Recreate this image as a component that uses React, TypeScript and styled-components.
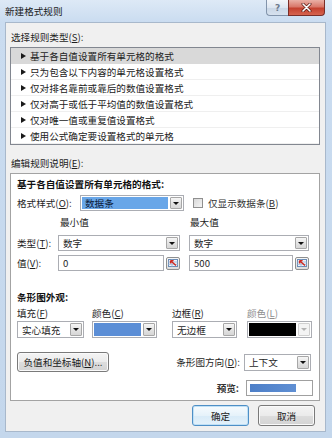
import React from 'react';
import styled, { createGlobalStyle } from 'styled-components';

const Global = createGlobalStyle`
  html, body { margin: 0; padding: 0; background: #c6d8ed; }
  body {
    font-family: "Noto Sans CJK SC", "Noto Sans", sans-serif;
    font-size: 9.6px;
    color: #1e1e1e;
  }
  * { box-sizing: border-box; }
  u { text-decoration: underline; text-underline-offset: 1px; }
`;

const Window = styled.div`
  width: 332px;
  height: 438px;
  display: flex;
  flex-direction: column;
  padding: 0 6px 6px 5px;
  background: linear-gradient(180deg, #dde9f6 0px, #cadcf0 22px, #c4d7ec 100%);
`;

const TitleBar = styled.div`
  height: 22px;
  display: flex;
  align-items: flex-start;
  flex-shrink: 0;
`;

const TitleText = styled.div`
  flex: 1;
  line-height: 22px;
  color: #1a1a1a;
`;

const CaptionButtons = styled.div`
  display: flex;
  margin-right: 1px;
`;

const HelpButton = styled.div`
  width: 22px;
  height: 16px;
  border: 1px solid #8294ab;
  border-top: none;
  border-right: none;
  border-radius: 0 0 0 4px;
  background: linear-gradient(180deg, #f3f6fa 0%, #dde6f1 50%, #c9d6e6 51%, #d6e1ee 100%);
  display: flex;
  align-items: center;
  justify-content: center;
  color: #6d7b8d;
  font-family: "DejaVu Sans", sans-serif;
  font-size: 9px;
  font-weight: bold;
`;

const CloseButton = styled.div`
  width: 37px;
  height: 16px;
  border: 1px solid #7a2e28;
  border-top: none;
  border-radius: 0 0 4px 0;
  background: linear-gradient(180deg, #eab0a6 0%, #d9786a 45%, #c4412f 55%, #d6644f 100%);
  display: flex;
  align-items: center;
  justify-content: center;
`;

const Content = styled.div`
  flex: 1;
  background: #f0f0f0;
  border: 1px solid #a8b8cb;
  padding: 6px 5px 0 4px;
  display: flex;
  flex-direction: column;
`;

const SectionLabel = styled.div<{ $top?: number }>`
  height: 16px;
  line-height: 16px;
  margin-top: ${p => p.$top ?? 0}px;
  margin-bottom: 2px;
  padding-left: 1px;
`;

const RuleList = styled.div`
  height: 98px;
  border: 1px solid #828790;
  background: #fff;
  display: flex;
  flex-direction: column;
`;

const RuleRow = styled.div<{ $selected?: boolean }>`
  height: 16px;
  display: flex;
  align-items: center;
  padding-left: 10px;
  gap: 4px;
  background: ${p => (p.$selected ? '#d9d9d9' : '#fff')};
  border-bottom: 1px solid ${p => (p.$selected ? '#d9d9d9' : '#efefef')};
  color: #222;
`;

const RowArrow = styled.span`
  width: 0;
  height: 0;
  border-top: 3px solid transparent;
  border-bottom: 3px solid transparent;
  border-left: 5px solid #1a1a1a;
`;

const EditBox = styled.div`
  height: 228px;
  border: 1px solid #a3a3a3;
  background: #fff;
  padding: 2px 8px 0 6px;
  display: flex;
  flex-direction: column;
`;

const BoldLine = styled.div<{ $top: number }>`
  height: 16px;
  line-height: 16px;
  margin-top: ${p => p.$top}px;
  font-weight: 700;
  color: #111;
`;

const StyleRow = styled.div`
  margin-top: 3px;
  height: 16px;
  display: flex;
  align-items: center;
`;

const FieldLabel = styled.div<{ $w?: number; $muted?: boolean }>`
  width: ${p => (p.$w ? `${p.$w}px` : 'auto')};
  flex-shrink: 0;
  color: ${p => (p.$muted ? '#8e8e8e' : '#1e1e1e')};
  white-space: nowrap;
`;

const Combo = styled.div<{ $w?: number; $h?: number }>`
  width: ${p => (p.$w ? `${p.$w}px` : '100%')};
  height: ${p => p.$h ?? 16}px;
  border: 1px solid #abadb3;
  background: #fff;
  padding: 1px;
  display: flex;
  align-items: stretch;
`;

const ComboText = styled.div<{ $selected?: boolean }>`
  flex: 1;
  padding-left: 3px;
  display: flex;
  align-items: center;
  margin-right: 2px;
  background: ${p => (p.$selected ? '#68a6e8' : 'transparent')};
  color: ${p => (p.$selected ? '#0c1a38' : '#1e1e1e')};
`;

const Swatch = styled.div<{ $color: string }>`
  flex: 1;
  margin-right: 2px;
  background: ${p => p.$color};
`;

const ComboButton = styled.div<{ $disabled?: boolean }>`
  width: 12px;
  border: 1px solid ${p => (p.$disabled ? '#d0d0d0' : '#a7a7a7')};
  border-radius: 1px;
  background: ${p => (p.$disabled ? '#f4f4f4' : 'linear-gradient(180deg, #f6f6f6 0%, #e4e4e4 50%, #d6d6d6 100%)')};
  display: flex;
  align-items: center;
  justify-content: center;
`;

const DownArrow = styled.span<{ $disabled?: boolean }>`
  width: 0;
  height: 0;
  border-left: 3px solid transparent;
  border-right: 3px solid transparent;
  border-top: 3px solid ${p => (p.$disabled ? '#b4b4b4' : '#111')};
`;

const CheckBox = styled.span`
  width: 10px;
  height: 10px;
  margin-left: 9px;
  border: 1px solid #8f8f8f;
  background: linear-gradient(135deg, #d8d8d8, #f4f4f4);
  flex-shrink: 0;
`;

const CheckText = styled.span`
  margin-left: 5px;
  color: #333;
`;

const FieldGrid = styled.div<{ $top: number }>`
  margin-top: ${p => p.$top}px;
  height: 16px;
  display: grid;
  grid-template-columns: 32px 122px 120px;
  column-gap: 9px;
  align-items: center;
`;

const ColHeader = styled.div<{ $pad: number }>`
  padding-left: ${p => p.$pad}px;
`;

const ValueCell = styled.div`
  display: flex;
  align-items: center;
  gap: 2px;
  height: 16px;
`;

const TextInput = styled.div`
  flex: 1;
  height: 16px;
  border: 1px solid #abadb3;
  background: #fff;
  padding-left: 4px;
  display: flex;
  align-items: center;
`;

const RefButton = styled.div`
  width: 14px;
  height: 13px;
  border: 1px solid #8e8f8f;
  border-radius: 2px;
  background: linear-gradient(180deg, #f8f8f8, #dcdcdc);
  display: flex;
  align-items: center;
  justify-content: center;
`;

const AppearGrid = styled.div<{ $top: number; $h: number }>`
  margin-top: ${p => p.$top}px;
  height: ${p => p.$h}px;
  display: grid;
  grid-template-columns: 75px 80px 75px 65px;
  align-items: center;
`;

const ActionRow = styled.div`
  margin-top: 14px;
  height: 20px;
  display: flex;
  align-items: center;
`;

const PushButton = styled.div<{ $w: number; $h?: number; $default?: boolean }>`
  width: ${p => p.$w}px;
  height: ${p => p.$h ?? 21}px;
  border: 1px solid ${p => (p.$default ? '#4e8fc6' : '#7a7a7a')};
  border-radius: 3px;
  background: ${p =>
    p.$default
      ? 'linear-gradient(180deg, #f6fbfe 0%, #e6f2fa 50%, #d8ebf8 51%, #e4f1fa 100%)'
      : 'linear-gradient(180deg, #f4f4f4 0%, #ebebeb 50%, #dddddd 51%, #d3d3d3 100%)'};
  box-shadow: ${p => (p.$default ? 'inset 0 0 0 1px #bfe0f6' : 'inset 0 0 0 1px #fafafa')};
  display: flex;
  align-items: center;
  justify-content: center;
  color: #1a1a1a;
  flex-shrink: 0;
`;

const Spacer = styled.div`
  flex: 1;
`;

const DirLabel = styled.div`
  margin-right: 4px;
`;

const PreviewRow = styled.div`
  margin-top: 8px;
  height: 16px;
  display: flex;
  align-items: center;
  justify-content: flex-end;
  margin-right: -2px;
`;

const PreviewLabel = styled.div`
  margin-right: 7px;
  font-weight: 700;
  color: #333;
`;

const PreviewBox = styled.div`
  width: 67px;
  height: 16px;
  border: 1px solid #a0a0a0;
  background: #fff;
  padding: 3px 16px 3px 3px;
`;

const PreviewBar = styled.div`
  height: 100%;
  background: linear-gradient(90deg, #4d7fc8, #5f8fd3);
`;

const Footer = styled.div`
  margin-top: 4px;
  display: flex;
  justify-content: flex-end;
  gap: 9px;
  padding-right: 5px;
`;

const rules = [
  '基于各自值设置所有单元格的格式',
  '只为包含以下内容的单元格设置格式',
  '仅对排名靠前或靠后的数值设置格式',
  '仅对高于或低于平均值的数值设置格式',
  '仅对唯一值或重复值设置格式',
  '使用公式确定要设置格式的单元格',
];

const RefIcon = () => (
  <svg width="10" height="8" viewBox="0 0 10 8">
    <rect x="0.5" y="0.5" width="9" height="7" fill="#eef4fb" stroke="#6a8cb6" />
    <line x1="0.5" y1="3" x2="9.5" y2="3" stroke="#a9bfda" />
    <line x1="0.5" y1="5.3" x2="9.5" y2="5.3" stroke="#a9bfda" />
    <line x1="4" y1="0.5" x2="4" y2="7.5" stroke="#a9bfda" />
    <path d="M8 6.5 L3.2 2.2 M2.6 1.6 L2.6 4.6 M2.6 1.6 L5.6 1.6" stroke="#d0281e" strokeWidth="1.4" fill="none" />
  </svg>
);

const CloseGlyph = () => (
  <svg width="11" height="9" viewBox="0 0 11 9">
    <path d="M2 1 L9 8 M9 1 L2 8" stroke="#5a1a14" strokeWidth="3" strokeLinecap="round" />
    <path d="M2 1 L9 8 M9 1 L2 8" stroke="#ffffff" strokeWidth="1.6" strokeLinecap="round" />
  </svg>
);

const Dropdown = ({ text, w, h, selected }: { text: string; w?: number; h?: number; selected?: boolean }) => (
  <Combo $w={w} $h={h}>
    <ComboText $selected={selected}>{text}</ComboText>
    <ComboButton>
      <DownArrow />
    </ComboButton>
  </Combo>
);

const ColorDropdown = ({ color, w, disabled }: { color: string; w: number; disabled?: boolean }) => (
  <Combo $w={w} $h={17}>
    <Swatch $color={color} />
    <ComboButton $disabled={disabled}>
      <DownArrow $disabled={disabled} />
    </ComboButton>
  </Combo>
);

export default function App() {
  return (
    <>
      <Global />
      <Window>
        <TitleBar>
          <TitleText>新建格式规则</TitleText>
          <CaptionButtons>
            <HelpButton>?</HelpButton>
            <CloseButton>
              <CloseGlyph />
            </CloseButton>
          </CaptionButtons>
        </TitleBar>
        <Content>
          <SectionLabel>
            选择规则类型(<u>S</u>):
          </SectionLabel>
          <RuleList>
            {rules.map((r, i) => (
              <RuleRow key={r} $selected={i === 0}>
                <RowArrow />
                {r}
              </RuleRow>
            ))}
          </RuleList>
          <SectionLabel $top={10}>
            编辑规则说明(<u>E</u>):
          </SectionLabel>
          <EditBox>
            <BoldLine $top={0}>基于各自值设置所有单元格的格式:</BoldLine>
            <StyleRow>
              <FieldLabel $w={63}>
                格式样式(<u>O</u>):
              </FieldLabel>
              <Dropdown text="数据条" w={104} selected />
              <CheckBox />
              <CheckText>
                仅显示数据条(<u>B</u>)
              </CheckText>
            </StyleRow>
            <FieldGrid $top={3}>
              <span />
              <ColHeader $pad={2}>最小值</ColHeader>
              <ColHeader $pad={1}>最大值</ColHeader>
            </FieldGrid>
            <FieldGrid $top={5}>
              <FieldLabel>
                类型(<u>T</u>):
              </FieldLabel>
              <Dropdown text="数字" />
              <Dropdown text="数字" />
            </FieldGrid>
            <FieldGrid $top={4}>
              <FieldLabel>
                值(<u>V</u>):
              </FieldLabel>
              <ValueCell>
                <TextInput>0</TextInput>
                <RefButton>
                  <RefIcon />
                </RefButton>
              </ValueCell>
              <ValueCell>
                <TextInput>500</TextInput>
                <RefButton>
                  <RefIcon />
                </RefButton>
              </ValueCell>
            </FieldGrid>
            <BoldLine $top={18}>条形图外观:</BoldLine>
            <AppearGrid $top={1} $h={14}>
              <FieldLabel>
                填充(<u>F</u>)
              </FieldLabel>
              <FieldLabel>
                颜色(<u>C</u>)
              </FieldLabel>
              <FieldLabel>
                边框(<u>R</u>)
              </FieldLabel>
              <FieldLabel $muted>
                颜色(<u>L</u>)
              </FieldLabel>
            </AppearGrid>
            <AppearGrid $top={1} $h={17}>
              <Dropdown text="实心填充" w={67} h={17} />
              <ColorDropdown color="#5b8ed6" w={65} />
              <Dropdown text="无边框" w={65} h={17} />
              <ColorDropdown color="#000000" w={65} disabled />
            </AppearGrid>
            <ActionRow>
              <PushButton $w={92} $h={20}>
                负值和坐标轴(<u>N</u>)...
              </PushButton>
              <Spacer />
              <DirLabel>
                条形图方向(<u>D</u>):
              </DirLabel>
              <Dropdown text="上下文" w={67} h={17} />
            </ActionRow>
            <PreviewRow>
              <PreviewLabel>预览:</PreviewLabel>
              <PreviewBox>
                <PreviewBar />
              </PreviewBox>
            </PreviewRow>
          </EditBox>
          <Footer>
            <PushButton $w={57} $default>
              确定
            </PushButton>
            <PushButton $w={57}>取消</PushButton>
          </Footer>
        </Content>
      </Window>
    </>
  );
}
